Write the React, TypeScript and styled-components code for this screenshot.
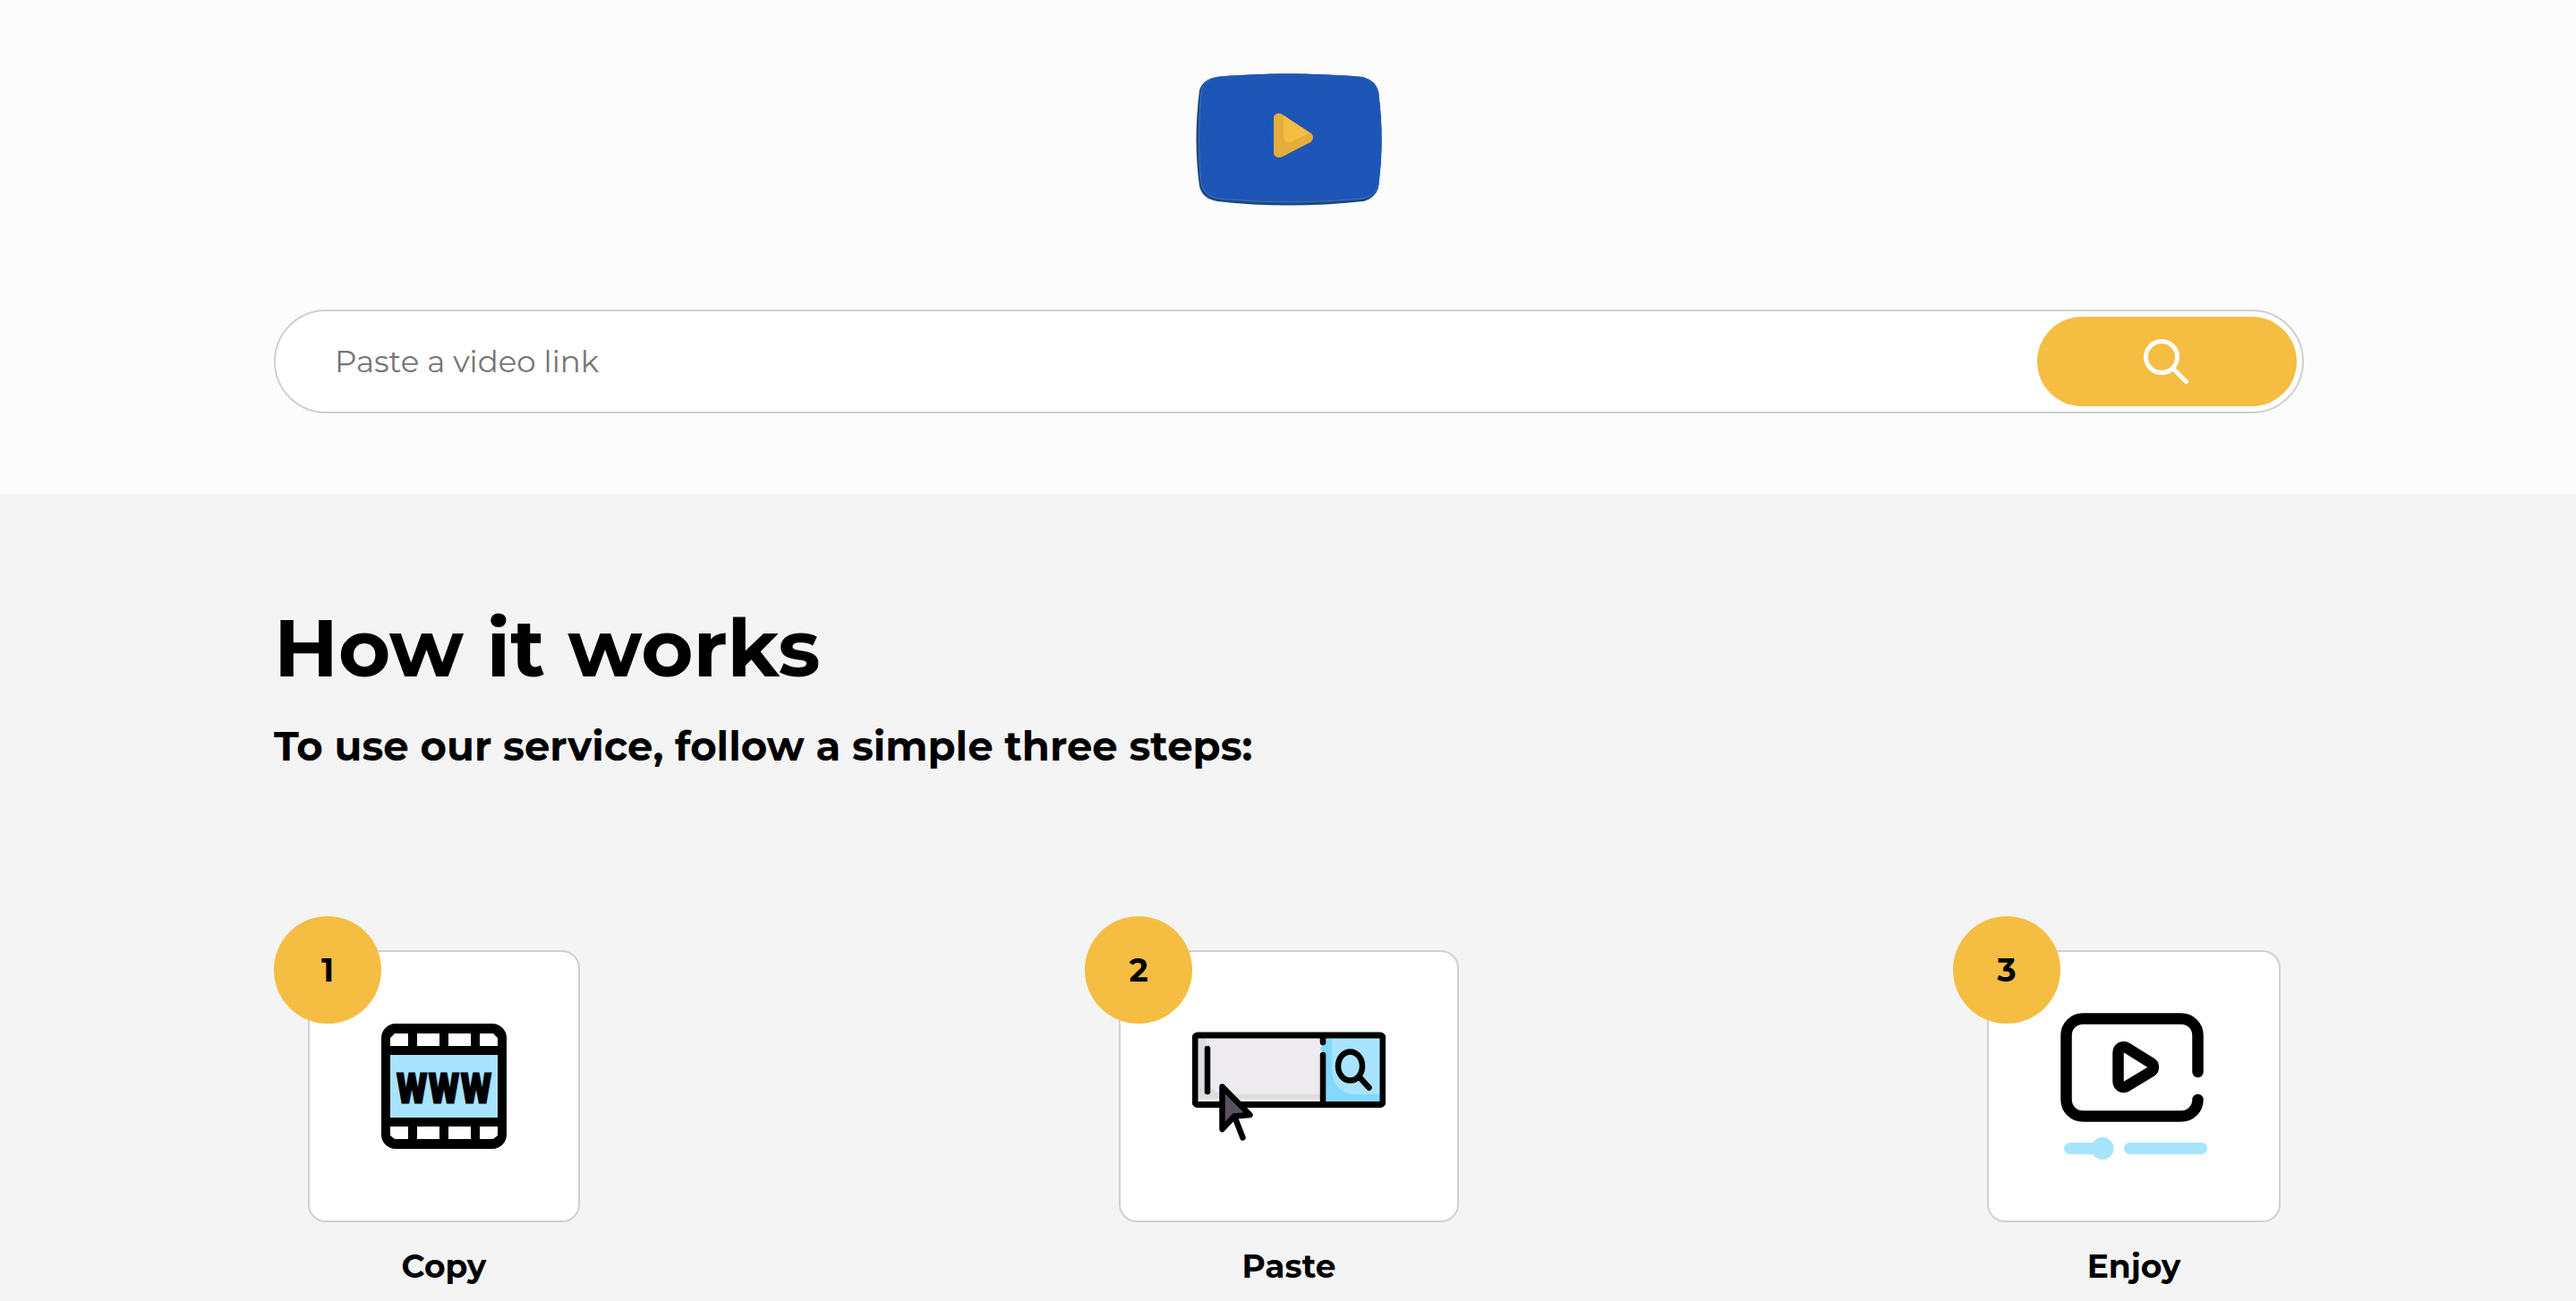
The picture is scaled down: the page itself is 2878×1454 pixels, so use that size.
import React from "react";
import styled, { createGlobalStyle } from "styled-components";

const GlobalStyle = createGlobalStyle`
  *, *::before, *::after { box-sizing: border-box; }
  body {
    margin: 0;
    background: #f4f4f4;
    color: #000;
    font-family: Montserrat, Inter, "Liberation Sans", sans-serif;
  }
`;

const Hero = styled.header`
  display: flex;
  flex-direction: column;
  align-items: center;
  gap: 116px;
  padding: 82px 304px 90px 306px;
  background: #fcfcfc;
`;

const LogoLink = styled.a`
  display: block;
  svg { display: block; }
`;

const SearchForm = styled.form`
  display: flex;
  width: 100%;
  height: 116px;
  padding: 6px;
  border: 2px solid #d0d0d0;
  border-radius: 58px;
  background: #fff;
`;

const SearchInput = styled.input`
  flex: 1;
  min-width: 0;
  padding: 0 60px;
  border: 0;
  outline: 0;
  background: transparent;
  font: 400 34px/42px Montserrat, Inter, "Liberation Sans", sans-serif;
  &::placeholder { color: #757575; opacity: 1; }
`;

const SearchButton = styled.button`
  display: flex;
  align-items: center;
  justify-content: center;
  width: 290px;
  padding: 0 2px 0 0;
  border: 0;
  border-radius: 50px;
  background: #f5bd41;
  cursor: pointer;
`;

const Section = styled.section`
  padding: 116px 304px 0 306px;
`;

const Title = styled.h2`
  margin: 0;
  font-size: 89px;
  line-height: 112px;
  font-weight: 700;
`;

const Subtitle = styled.h3`
  margin: 0;
  padding-top: 26px;
  font-size: 45px;
  line-height: 56px;
  font-weight: 700;
`;

const Steps = styled.ol`
  display: grid;
  grid-template-columns: repeat(3, 380px);
  justify-content: space-between;
  margin: 0;
  padding: 200px 0 0;
  list-style: none;
`;

const Step = styled.li`
  display: flex;
  flex-direction: column;
  align-items: center;
  gap: 28px;
`;

const Card = styled.div`
  position: relative;
  display: flex;
  align-items: center;
  height: 304px;
  padding: 0 80px;
  border: 2px solid #d0d0d0;
  border-radius: 20px;
  background: #fff;
`;

const Badge = styled.span`
  position: absolute;
  top: -40px;
  left: -40px;
  display: flex;
  align-items: center;
  justify-content: center;
  width: 120px;
  height: 120px;
  border-radius: 50%;
  background: #f5bd41;
  font-size: 36px;
  line-height: 42px;
  font-weight: 700;
`;

const StepName = styled.h4`
  margin: 0;
  font-size: 36px;
  line-height: 42px;
  font-weight: 700;
`;

const Logo = () => (
  <svg width="208" height="148" viewBox="0 0 208 148" aria-hidden="true">
    <path
      fill="#1a4a80"
      d="M24 4Q102-3 185 4Q201 7 204 21Q211 75 204 128Q200 140 187 143Q102 152 24 143Q7 140 4 126Q-3 75 4 19Q8 6 24 4Z"
    />
    <path
      fill="#1e56b7"
      stroke="#5f86c4"
      strokeWidth="0.6"
      d="M24 4Q102-3 185 4Q201 7 204 21Q211 75 204 125Q200 138 186 140Q102 148 26 140Q9 138 6 123Q1 75 6 20Q9 6 24 4Z"
    />
    <path fill="#1e56b7" d="M24 4Q102-3 185 4Q201 7 204 21Q211 75 204 125L100 100Z" />
    <path
      fill="#e4ae3d"
      d="M87 50C87 45 93 43 97.500 46.500L128 66.500C132 69 132 74 128 77L96 93.500C91 95 87 93 87 88Z"
    />
    <path fill="#f5bd41" d="M98 47L127.500 66.500L107 76.500Q98 79 98 70Z" />
  </svg>
);

const SearchIcon = () => (
  <svg width="50" height="50" viewBox="0 0 50 50" fill="none" stroke="#fff" strokeWidth="5" aria-hidden="true">
    <circle cx="20" cy="20" r="17.500" />
    <path d="M33 33L47.500 47.500" strokeLinecap="round" />
  </svg>
);

const FILM_HOLES = [
  { x: 40, width: 25 },
  { x: 75, width: 25 },
];

const FilmIcon = () => (
  <svg width="140" height="140" viewBox="0 0 140 140" aria-hidden="true">
    <rect width="140" height="140" rx="16" />
    <rect x="10" y="35" width="120" height="70" fill="#a8e4ff" />
    {[11, 115].map((y) => (
      <g key={y} fill="#fff">
        {FILM_HOLES.map((hole) => (
          <rect key={hole.x} x={hole.x} y={y} width={hole.width} height="14" />
        ))}
      </g>
    ))}
    <g fill="#fff">
      <path d="M15 11H30V25H10V16Z" />
      <path d="M110 11H125L130 16V25H110Z" />
      <path d="M10 115H30V129H15L10 125Z" />
      <path d="M110 115H130V125L125 129H110Z" />
    </g>
    <text
      x="70"
      y="89"
      textAnchor="middle"
      fontFamily='"Roboto Condensed", "Open Sans Condensed", "Noto Sans Condensed", Roboto, sans-serif'
      fontSize="48"
      fontWeight="800"
      stroke="#000"
      strokeWidth="1"
    >
      WWW
    </text>
  </svg>
);

const PasteIcon = () => (
  <svg width="216" height="122" viewBox="0 0 216 122" fill="none" strokeLinecap="round" strokeLinejoin="round" aria-hidden="true">
    <rect x="4" y="4" width="142" height="77" fill="#edebee" />
    <path d="M6 8H16Q12 40 18 58Q24 70 40 70H143V75H6Z" fill="#dfdce1" />
    <rect x="146" y="4" width="66" height="77" fill="#a8e4ff" />
    <path d="M146 8H156V45Q158 68 182 70H211V78H146V24L143 19L146 14Z" fill="#82d8ff" />
    <rect x="3" y="4" width="210" height="77.500" rx="3" stroke="#000" strokeWidth="7" />
    <g stroke="#000" strokeWidth="6.500">
      <path d="M146 6V12M146 26V80" />
      <path d="M17 19V67" />
      <ellipse cx="176.500" cy="38.500" rx="13.500" ry="16" />
      <path d="M187 51L197.500 62.500" />
      <path d="M33.500 61.500L64.500 93L47 94.500L33.500 109Z" fill="#5b5260" />
      <path d="M48.500 98L56.500 118.500" />
    </g>
  </svg>
);

const PlayerIcon = () => (
  <svg width="164" height="164" viewBox="0 0 164 164" fill="none" strokeLinecap="round" strokeLinejoin="round" aria-hidden="true">
    <g stroke="#000" strokeWidth="12.500">
      <path d="M153.500 66V25A18.500 18.500 0 0 0 135 6.500H25A18.500 18.500 0 0 0 6.500 25V97A18.500 18.500 0 0 0 25 115.500H135A18.500 18.500 0 0 0 153.500 97" />
      <path d="M64.500 45V76C64.500 82 70 84.500 74 82L100.500 66C105 63.500 105 58 100.500 55.500L74 39C70 36.500 64.500 39 64.500 45Z" />
    </g>
    <path d="M10.500 151.500H46M77.500 151.500H157.500" stroke="#a8e4ff" strokeWidth="13" />
    <circle cx="47" cy="151.500" r="12.500" fill="#a8e4ff" />
  </svg>
);

const STEPS = [
  { name: "Copy", Icon: FilmIcon },
  { name: "Paste", Icon: PasteIcon },
  { name: "Enjoy", Icon: PlayerIcon },
];

export default function App() {
  return (
    <>
      <GlobalStyle />
      <Hero>
        <LogoLink href="#" aria-label="Home">
          <Logo />
        </LogoLink>
        <SearchForm onSubmit={(event) => event.preventDefault()}>
          <SearchInput type="text" aria-label="Video link" placeholder="Paste a video link" />
          <SearchButton type="submit" aria-label="Search">
            <SearchIcon />
          </SearchButton>
        </SearchForm>
      </Hero>
      <Section>
        <Title>How it works</Title>
        <Subtitle>To use our service, follow a simple three steps:</Subtitle>
        <Steps>
          {STEPS.map(({ name, Icon }, index) => (
            <Step key={name}>
              <Card>
                <Badge>{index + 1}</Badge>
                <Icon />
              </Card>
              <StepName>{name}</StepName>
            </Step>
          ))}
        </Steps>
      </Section>
    </>
  );
}
